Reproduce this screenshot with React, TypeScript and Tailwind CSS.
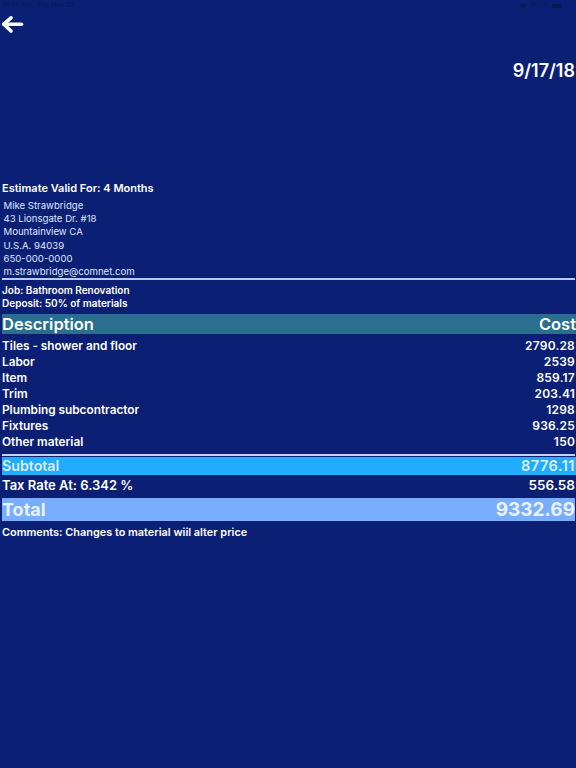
const items = [
  { label: "Tiles - shower and floor", cost: "2790.28" },
  { label: "Labor", cost: "2539" },
  { label: "Item", cost: "859.17" },
  { label: "Trim", cost: "203.41" },
  { label: "Plumbing subcontractor", cost: "1298" },
  { label: "Fixtures", cost: "936.25" },
  { label: "Other material", cost: "150" },
]

const address = [
  "Mike Strawbridge",
  "43 Lionsgate Dr. #18",
  "Mountainview CA",
  "U.S.A. 94039",
  "650-000-0000",
  "m.strawbridge@comnet.com",
]

export default function App() {
  return (
    <div className="h-[768px] w-[576px] overflow-hidden bg-[#0b1f75] font-['Inter',sans-serif] text-white">
      {/* Status bar */}
      <div className="flex h-3 items-center justify-between pl-[3px] pr-[14px] text-[6.5px] text-[#0a1a50]">
        <span className="flex gap-[6px]">
          <span>10:07 AM</span>
          <span>Thu May 23</span>
        </span>
        <span className="flex items-center gap-[4px]">
          <svg width="7" height="6" viewBox="0 0 7 6">
            <path d="M0 2 Q3.5 -1 7 2 L3.5 6 Z" fill="#0a1a50" />
          </svg>
          <span>100%</span>
          <span className="h-[4px] w-[10px] bg-[#0a1a50]" />
        </span>
      </div>

      <div className="h-[24px]">
        <svg width="24" height="24" viewBox="0 0 24 24" fill="none" stroke="white" strokeWidth="3.6" strokeLinecap="round" strokeLinejoin="round">
          <path d="M3.8 12.2H21.5" />
          <path d="M11 5.8L3.8 12.2L11 19" />
        </svg>
      </div>

      <div className="mt-[25px] flex justify-end pr-[1px] text-[18px] leading-5 font-semibold">9/17/18</div>

      <div className="mt-[100px] pl-[2px] text-[11px] leading-[14px] font-semibold">Estimate Valid For: 4 Months</div>

      <div className="mt-[4px] pl-[3.5px] text-[9.6px] leading-[13.2px] text-[#dfe6ff]">
        {address.map((line) => (
          <div key={line}>{line}</div>
        ))}
      </div>

      <div className="ml-[2px] mr-[1px] h-[1.5px] bg-[#b9c8f5]" />

      <div className="mt-[4px] pl-[2px] text-[10px] leading-[13.3px] font-semibold">
        <div>Job: Bathroom Renovation</div>
        <div>Deposit: 50% of materials</div>
      </div>

      {/* Line items */}
      <div className="mt-[4px] ml-[2px] flex h-[20px] items-center justify-between bg-[#2a6e90] text-[16.5px] font-semibold">
        <span>Description</span>
        <span>Cost</span>
      </div>

      <div className="mt-[4px] pl-[2px] pr-[1px] text-[11.8px] leading-4 font-semibold">
        {items.map((item) => (
          <div key={item.label} className="flex justify-between">
            <span>{item.label}</span>
            <span className="text-[12px] tracking-[0.2px]">{item.cost}</span>
          </div>
        ))}
      </div>

      <div className="mt-[4px] ml-[2px] mr-[1px] h-[1.5px] bg-[#c4d2f8]" />

      <div className="mt-[1.5px] ml-[2px] flex h-[17.5px] items-center justify-between bg-[#22abff] pr-[1px] text-[14.2px] font-semibold text-[#d9efff]">
        <span>Subtotal</span>
        <span className="text-[14.5px] tracking-[0.5px]">8776.11</span>
      </div>

      <div className="mt-[2.5px] flex h-[16px] items-center justify-between pl-[2px] pr-[1px] text-[13px] font-semibold">
        <span>Tax Rate At: 6.342 %</span>
        <span className="text-[13.5px]">556.58</span>
      </div>

      <div className="mt-[5px] ml-[2px] mr-[1px] flex h-[23px] items-center justify-between bg-[#79aeff] text-[18px] font-bold text-[#e8f1ff]">
        <span>Total</span>
        <span className="text-[19px]">9332.69</span>
      </div>

      <div className="mt-[4px] pl-[2px] text-[10.9px] leading-[14px] font-semibold">Comments: Changes to material wiil alter price</div>
    </div>
  )
}
